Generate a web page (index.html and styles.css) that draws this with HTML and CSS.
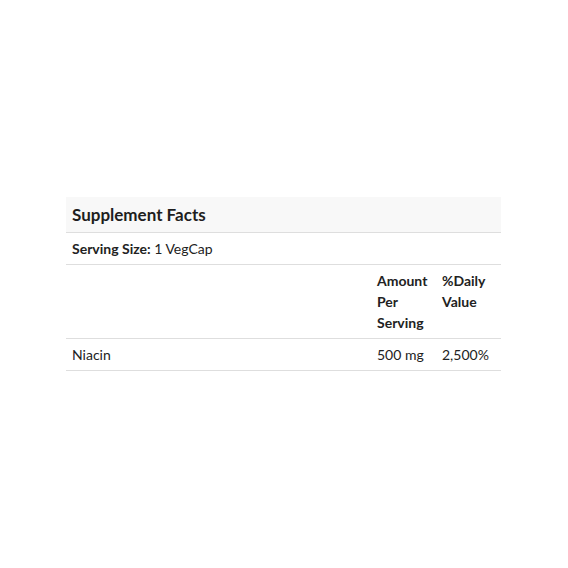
FILE: index.html
```html
<!DOCTYPE html>
<html>
<head>
<meta charset="utf-8">
<link rel="stylesheet" href="styles.css">
</head>
<body>
<div class="page">
  <table class="facts">
    <thead>
      <tr class="title-row"><th colspan="3">Supplement Facts</th></tr>
    </thead>
    <tbody>
      <tr class="serving-row"><td colspan="3"><strong>Serving Size:</strong> 1 VegCap</td></tr>
      <tr class="col-head">
        <td class="name"></td>
        <td class="amt">Amount Per Serving</td>
        <td class="dv">%Daily Value</td>
      </tr>
      <tr>
        <td class="name">Niacin</td>
        <td class="amt">500 mg</td>
        <td class="dv">2,500%</td>
      </tr>
    </tbody>
  </table>
</div>
</body>
</html>
```
FILE: styles.css
```css
html, body {
  margin: 0;
  padding: 0;
  background: #ffffff;
}
body {
  font-family: Lato, "Open Sans", sans-serif;
  color: #222;
}
.page {
  padding: 197px 0 0 66px;
}
.facts {
  width: 435px;
  border-collapse: collapse;
  font-size: 14px;
  line-height: 21px;
}
.facts th, .facts td {
  text-align: left;
  vertical-align: top;
  padding: 5px 6px 5px 6px;
  border-bottom: 1px solid #dedede;
}
.title-row th {
  background: #f8f8f8;
  font-size: 17px;
  font-weight: 700;
  padding: 7px 6px 7px 6px;
  line-height: 21px;
  color: #1e1e1e;
}
.serving-row td strong {
  font-weight: 700;
}
.col-head td {
  font-weight: 700;
}
.facts .amt {
  width: 53px;
}
.facts .dv {
  width: 53px;
}
```
